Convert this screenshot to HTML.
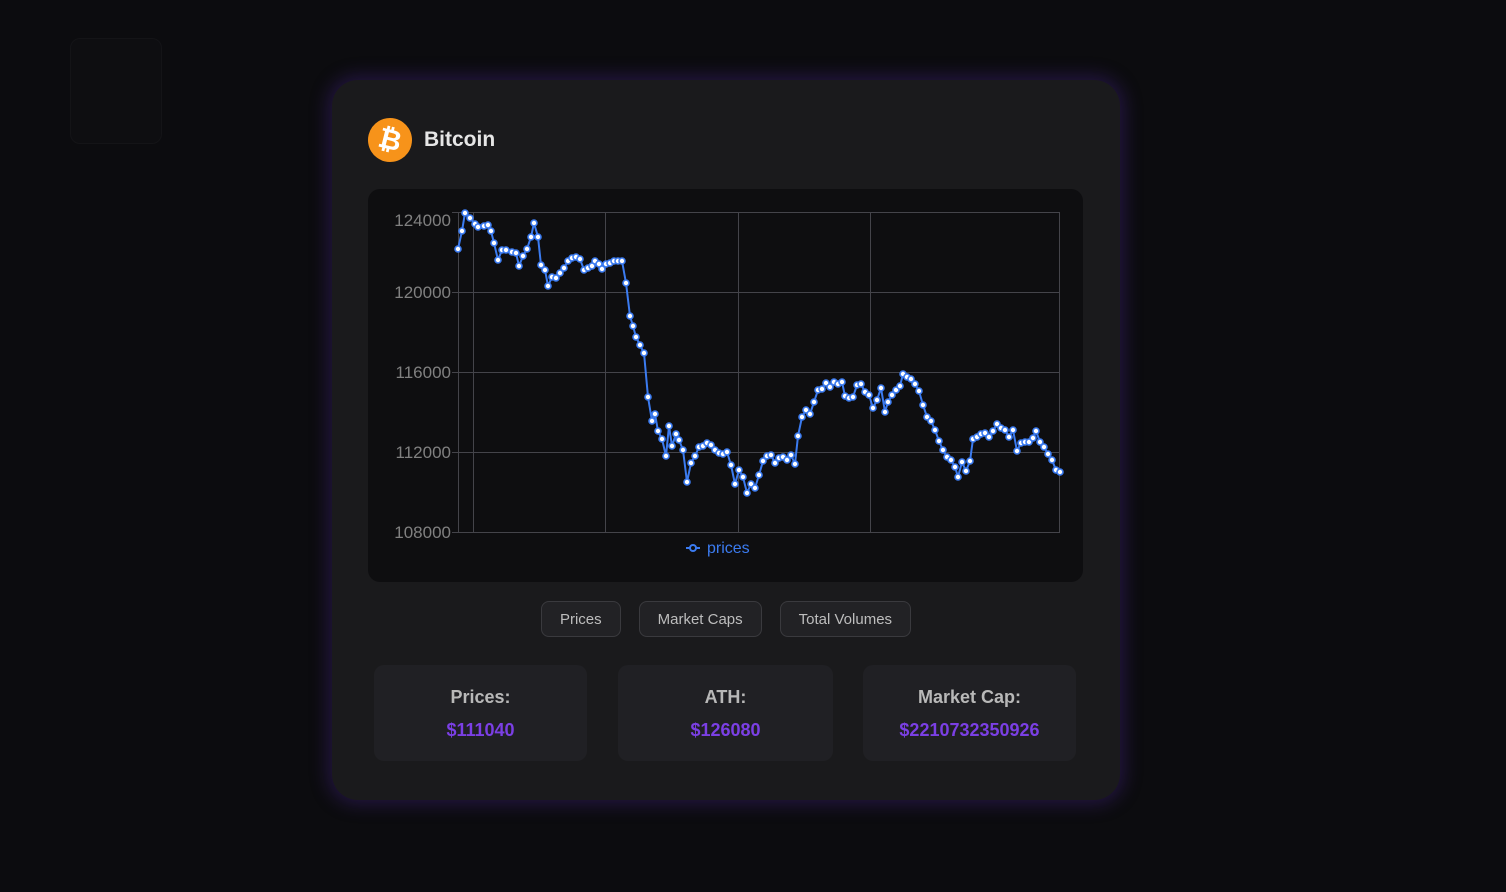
<!DOCTYPE html>
<html><head><meta charset="utf-8"><style>
*{margin:0;padding:0;box-sizing:border-box}
body{width:1506px;height:892px;background:#0c0c0f;font-family:"Liberation Sans",sans-serif;position:relative;overflow:hidden}
.card{position:absolute;left:332px;top:80px;width:788px;height:720px;background:#1a1a1c;border-radius:26px;box-shadow:0 0 18px 4px rgba(80,40,160,.35)}
.title{position:absolute;left:36px;top:38px;display:flex;align-items:center}
.logo{width:44px;height:44px;border-radius:50%;background:#f7931a;color:#fff;font-weight:bold;font-size:28px;display:flex;align-items:center;justify-content:center;transform:rotate(14deg)}
.title span{margin-left:12px;color:#e6e6e6;font-size:21px;font-weight:bold}
.chart{position:absolute;left:36px;top:109px;width:715px;height:393px;background:#0e0e10;border-radius:12px}
.btns{position:absolute;top:521px;left:0;width:100%;display:flex;justify-content:center;gap:18px}
.btn{height:36px;border:1px solid #3a3a3e;border-radius:8px;background:#222225;color:#bdbdbd;font-size:15px;display:flex;align-items:center;padding:0 18px}
.stat{position:absolute;top:585px;width:213px;height:96px;background:#202024;border-radius:10px;text-align:center}
.stat .l{margin-top:22px;color:#b8b8b8;font-size:18px;font-weight:bold}
.stat .v{margin-top:12px;color:#7b3fe4;font-size:18px;font-weight:bold}
.ghost{position:absolute;background:#0e0e11;border:1px solid #141417;border-radius:10px}
</style></head><body>
<div class="ghost" style="left:70px;top:38px;width:92px;height:106px"></div>
<div class="card">
<div class="title"><div class="logo">₿</div><span>Bitcoin</span></div>
<div class="chart"></div>
<svg style="position:absolute;left:0;top:0" width="788" height="720" viewBox="332 80 788 720" id="s">
<g stroke="#44444a" stroke-width="1" fill="none">
<rect x="458.5" y="212.5" width="601" height="320"/>
<line x1="458" y1="292.5" x2="1060" y2="292.5"/><line x1="458" y1="372.5" x2="1060" y2="372.5"/><line x1="458" y1="452.5" x2="1060" y2="452.5"/>
<line x1="473.5" y1="212" x2="473.5" y2="532"/><line x1="605.5" y1="212" x2="605.5" y2="532"/><line x1="738.5" y1="212" x2="738.5" y2="532"/><line x1="870.5" y1="212" x2="870.5" y2="532"/>
<line x1="452" y1="212.5" x2="458" y2="212.5"/><line x1="452" y1="292.5" x2="458" y2="292.5"/><line x1="452" y1="372.5" x2="458" y2="372.5"/><line x1="452" y1="452.5" x2="458" y2="452.5"/><line x1="452" y1="532.5" x2="458" y2="532.5"/>
</g>
<g fill="#808080" font-family="Liberation Sans" font-size="17" text-anchor="end">
<text x="451" y="226">124000</text><text x="451" y="298">120000</text><text x="451" y="378">116000</text><text x="451" y="458">112000</text><text x="451" y="538">108000</text>
</g>
<line x1="686" y1="548" x2="700" y2="548" stroke="#3b7bf0" stroke-width="2"/><circle cx="693" cy="548" r="3" fill="#0e0e10" stroke="#3b7bf0" stroke-width="2"/>
<text x="707" y="553" fill="#3b7bf0" font-family="Liberation Sans" font-size="16">prices</text>
<g id="g"></g>
</svg>
<div class="btns"><div class="btn">Prices</div><div class="btn">Market Caps</div><div class="btn">Total Volumes</div></div>
<div class="stat" style="left:42px"><div class="l">Prices:</div><div class="v">$111040</div></div>
<div class="stat" style="left:286px;width:215px"><div class="l">ATH:</div><div class="v">$126080</div></div>
<div class="stat" style="left:531px"><div class="l">Market Cap:</div><div class="v">$2210732350926</div></div>
</div>
<script>
var p=[458,249,462,231,465,213,470,218,475,224,478,227,484,226,488,225,491,231,494,243,498,260,502,250,506,250,512,252,516,253,519,266,523,256,527,249,531,237,534,223,538,237,541,265,545,270,548,286,552,277,556,278,560,273,564,268,568,261,572,258,576,257,580,259,584,270,588,268,592,266,595,261,599,264,602,269,606,264,610,263,614,261,618,261,622,261,626,283,630,316,633,326,636,337,640,345,644,353,648,397,652,421,655,414,658,431,662,439,666,456,669,426,672,446,676,434,679,440,683,450,687,482,691,463,695,456,699,447,703,446,707,443,711,445,715,450,719,453,723,454,727,452,731,465,735,484,739,470,743,477,747,493,751,484,755,488,759,475,763,461,767,456,771,455,775,463,779,458,783,457,787,460,791,455,795,464,798,436,802,417,806,410,810,414,814,402,818,390,822,389,826,383,830,387,834,382,838,384,842,382,845,396,849,398,853,397,857,385,861,384,865,392,869,395,873,408,877,400,881,388,885,412,888,402,892,395,896,390,900,386,903,374,907,377,911,379,915,384,919,391,923,405,927,417,931,421,935,430,939,441,943,450,947,457,951,460,955,467,958,477,962,462,966,471,970,461,973,439,977,437,981,434,985,433,989,437,993,431,997,424,1001,428,1005,430,1009,437,1013,430,1017,451,1021,443,1025,442,1029,442,1033,438,1036,431,1040,442,1044,447,1048,454,1052,460,1056,470,1060,472];
var h='<polyline fill="none" stroke="#3b7bf0" stroke-width="2" points="'+p.join(' ')+'"/>';
for(var i=0;i<p.length;i+=2)h+='<circle cx="'+p[i]+'" cy="'+p[i+1]+'" r="3" fill="#fff" stroke="#3b7bf0" stroke-width="1.6"/>';
document.getElementById('g').innerHTML=h;
</script>
</body></html>
